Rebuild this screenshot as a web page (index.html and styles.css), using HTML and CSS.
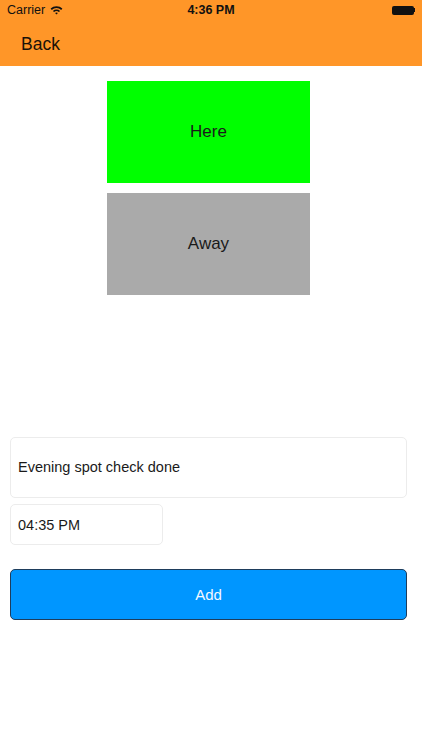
FILE: index.html
```html
<!DOCTYPE html>
<html>
<head>
<meta charset="utf-8">
<link rel="stylesheet" href="styles.css">
</head>
<body>
<div class="screen">
  <header class="topbar">
    <div class="status">
      <div class="status-left">
        <span class="carrier">Carrier</span>
        <svg class="wifi" width="13" height="10" viewBox="0 0 13 10">
          <path d="M0.6 3.6 A8.5 8.5 0 0 1 12.4 3.6 L11.2 4.9 A6.8 6.8 0 0 0 1.8 4.9 Z" fill="#111"/>
          <path d="M2.9 5.9 A5.2 5.2 0 0 1 10.1 5.9 L8.9 7.1 A3.5 3.5 0 0 0 4.1 7.1 Z" fill="#111"/>
          <path d="M5.1 8.1 A2 2 0 0 1 7.9 8.1 L6.5 9.6 Z" fill="#111"/>
        </svg>
      </div>
      <span class="clock">4:36 PM</span>
      <div class="status-right">
        <span class="battery"><span class="battery-fill"></span></span><span class="battery-tip"></span>
      </div>
    </div>
    <div class="navbar">
      <span class="back">Back</span>
    </div>
  </header>
  <main class="content">
    <div class="choices">
      <div class="choice here">Here</div>
      <div class="choice away">Away</div>
    </div>
    <div class="form">
      <div class="field note">Evening spot check done</div>
      <div class="field time">04:35 PM</div>
      <button class="add">Add</button>
    </div>
  </main>
</div>
</body>
</html>
```
FILE: styles.css
```css
* { box-sizing: border-box; }
html, body { margin: 0; padding: 0; background: #fff; }
body { font-family: "Helvetica Neue", "Liberation Sans", Arial, sans-serif; color: #111; }
.screen { width: 422px; height: 750px; background: #fff; }
.topbar { background: #ff9628; height: 66px; }
.status { height: 20px; display: flex; align-items: center; justify-content: space-between; padding: 0 7px; position: relative; }
.status-left { display: flex; align-items: center; gap: 5px; }
.carrier { font-size: 12.5px; color: #111; }
.wifi { display: block; }
.clock { position: absolute; left: 0; right: 0; text-align: center; font-size: 12.5px; font-weight: bold; color: #111; }
.status-right { display: flex; align-items: center; }
.battery { width: 22px; height: 9px; background: #111; border-radius: 2px; display: block; }
.battery-tip { width: 1.5px; height: 4px; background: #111; display: block; }
.navbar { height: 46px; display: flex; align-items: center; padding: 2px 0 0 21px; }
.back { font-size: 17.5px; color: #1a1208; }
.content { display: flex; flex-direction: column; }
.choices { display: flex; flex-direction: column; align-items: center; gap: 10px; padding-top: 15px; padding-right: 5px; }
.choice { width: 203px; height: 102px; display: flex; align-items: center; justify-content: center; font-size: 17px; color: #1a1a1a; }
.here { background: #00ff00; }
.away { background: #aaaaaa; }
.form { display: flex; flex-direction: column; align-items: flex-start; gap: 6px; padding: 142px 16px 0 10px; }
.field { background: #fff; border: 1px solid #ececec; border-radius: 5px; font-size: 14.5px; color: #1a1a1a; display: flex; align-items: center; padding-left: 7px; }
.note { width: 397px; height: 61px; padding-bottom: 2px; }
.time { width: 153px; height: 41px; }
.add { margin-top: 18px; width: 397px; height: 51px; background: #0096ff; border: 1.5px solid #1e3d5c; border-radius: 5px; color: #f4f8ff; font-size: 15px; font-family: inherit; padding: 0; }
```
